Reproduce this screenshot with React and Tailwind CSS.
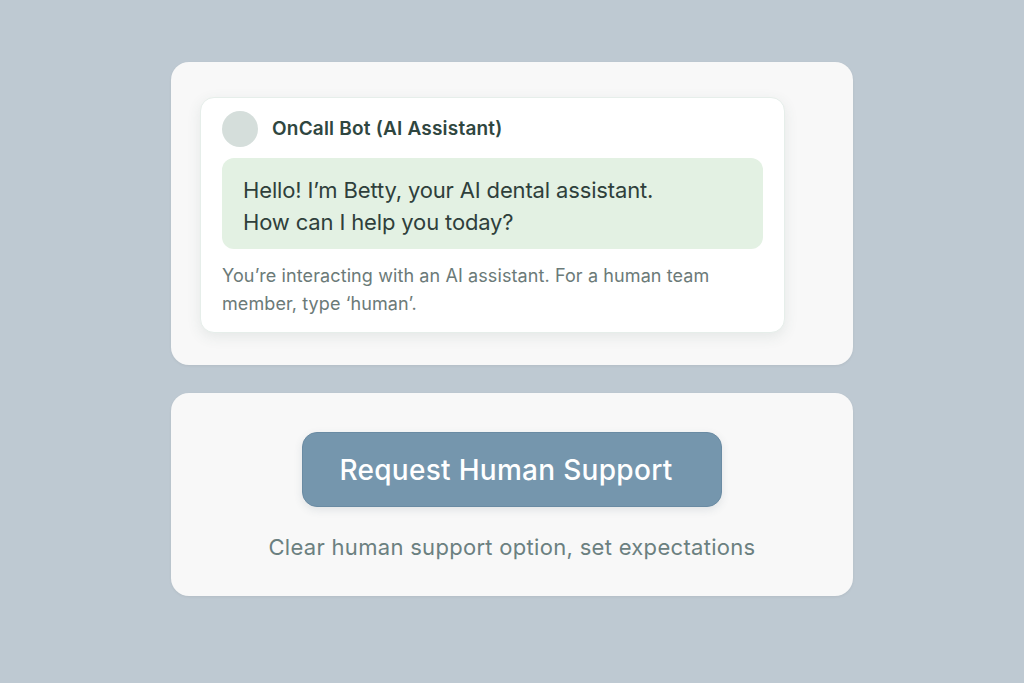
export default function App() {
  return (
    <div
      className="min-h-screen w-full bg-[#bec9d2] flex flex-col items-center pt-[62px] gap-[28px]"
      style={{ fontFamily: 'Inter, "Noto Sans", sans-serif' }}
    >
      {/* Chat card */}
      <section className="w-[682px] h-[303px] bg-[#f8f8f8] rounded-[18px] pt-[35px] pl-[29px] shadow-[0_1px_3px_rgba(0,0,0,0.06)]">
        <div className="w-[585px] h-[236px] bg-white rounded-[14px] px-[21px] pt-[13px] shadow-[0_4px_14px_rgba(60,90,80,0.10)] border border-[#e6eeea]">
          <div className="flex items-center gap-[14px] h-[36px]">
            <div className="w-[36px] h-[36px] rounded-full bg-[#d5dedb]" />
            <h2 className="text-[19px] font-semibold text-[#2f4640] tracking-[0.2px]">OnCall Bot (AI Assistant)</h2>
          </div>
          <div className="mt-[11px] h-[91px] bg-[#e3f1e3] rounded-[12px] px-[21px] pt-[16px] text-[22px] leading-[32px] text-[#2f3f3b] tracking-[-0.15px]">
            <p>Hello! I’m Betty, your AI dental assistant.</p>
            <p>How can I help you today?</p>
          </div>
          <p className="mt-[13px] text-[18px] leading-[28px] text-[#6b7a78] w-[540px] tracking-[0.1px]">
            You’re interacting with an AI assistant. For a human team member, type ‘human’.
          </p>
        </div>
      </section>

      {/* Support card */}
      <section className="w-[682px] h-[203px] bg-[#f8f8f8] rounded-[18px] flex flex-col items-center pt-[39px] shadow-[0_1px_3px_rgba(0,0,0,0.06)]">
        <button className="w-[420px] h-[75px] rounded-[15px] bg-[#7596ad] text-white text-[28px] font-medium tracking-[0.3px] pr-[12px] shadow-[0_3px_8px_rgba(60,80,100,0.12)] border border-[#6a8ba3]">
          Request Human Support
        </button>
        <p className="mt-[24px] text-[22px] text-[#6b8080] tracking-[0.3px]">
          Clear human support option, set expectations
        </p>
      </section>
    </div>
  );
}
